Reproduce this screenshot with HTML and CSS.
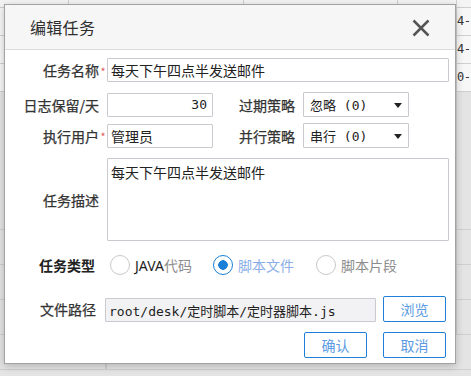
FILE: index.html
```html
<!DOCTYPE html>
<html lang="zh-CN">

<head>
    <meta charset="UTF-8">
    <meta name="viewport" content="width=device-width, initial-scale=1.0">
    <title>编辑任务</title>
    <link rel="stylesheet" href="styles.css">
</head>

<body>

    <!-- table behind the dialog -->
    <div class="sheet">
        <div class="sheet-row edge"><span class="cell w1"></span><span class="cell w2"></span><span class="cell w3"></span><span class="cell w4"></span><span class="cell w5"></span></div>
        <div class="sheet-row light"><span class="cell w1"></span><span class="cell w2"></span><span class="cell w3"></span><span class="cell w4"></span><span class="cell w5">4-</span></div>
        <div class="sheet-row light"><span class="cell w1"></span><span class="cell w2"></span><span class="cell w3"></span><span class="cell w4"></span><span class="cell w5">4-</span></div>
        <div class="sheet-row light"><span class="cell w1"></span><span class="cell w2"></span><span class="cell w3"></span><span class="cell w4"></span><span class="cell w5">0-</span></div>
        <div class="sheet-row tall"><span class="cell w1"></span><span class="cell w2"></span><span class="cell w3"></span><span class="cell w4"></span><span class="cell w5"></span></div>
        <div class="sheet-row"><span class="cell w1"></span><span class="cell w2"></span><span class="cell w3"></span><span class="cell w4"></span><span class="cell w5"></span></div>
        <div class="sheet-row"><span class="cell w1"></span><span class="cell w2"></span><span class="cell w3"></span><span class="cell w4"></span><span class="cell w5"></span></div>
        <div class="sheet-row"><span class="cell w1"></span><span class="cell w2"></span><span class="cell w3"></span><span class="cell w4"></span><span class="cell w5"></span></div>
        <div class="sheet-row"><span class="cell w0"></span><span class="cell"></span></div>
    </div>

    <form class="dialog">
        <div class="dialog-head">
            <h1>编辑任务</h1>
            <button type="button" class="close" aria-label="关闭">
                <svg width="18" height="18" viewBox="0 0 18 18">
                    <path d="M1.5 1.5 L16.5 16.5 M16.5 1.5 L1.5 16.5" stroke="#555" stroke-width="2.5" fill="none" />
                </svg>
            </button>
        </div>

        <div class="dialog-body">
            <div class="form-row r1">
                <label class="lbl" for="name">任务名称</label>
                <span class="req">*</span>
                <input type="text" id="name" class="field wide" value="每天下午四点半发送邮件">
            </div>

            <div class="form-row r2">
                <label class="lbl" for="keep">日志保留/天</label>
                <span class="req"></span>
                <input type="text" id="keep" class="field short num" value="30">
                <label class="lbl lbl2" for="expire">过期策略</label>
                <span class="req"></span>
                <div class="select" id="expire">忽略 (0)<span class="caret"></span></div>
            </div>

            <div class="form-row r3">
                <label class="lbl" for="user">执行用户</label>
                <span class="req">*</span>
                <input type="text" id="user" class="field short" value="管理员">
                <label class="lbl lbl2" for="parallel">并行策略</label>
                <span class="req"></span>
                <div class="select" id="parallel">串行 (0)<span class="caret"></span></div>
            </div>

            <div class="form-row r4">
                <label class="lbl" for="desc">任务描述</label>
                <span class="req"></span>
                <textarea id="desc" class="field area">每天下午四点半发送邮件</textarea>
            </div>

            <div class="form-row r5">
                <span class="lbl strong">任务类型</span>
                <div class="radios">
                    <div class="radio"><span class="dot"></span><span class="java">JAVA</span><span class="muted">代码</span></div>
                    <div class="radio checked"><span class="dot"></span>脚本文件</div>
                    <div class="radio"><span class="dot"></span><span class="muted">脚本片段</span></div>
                </div>
            </div>

            <div class="form-row r6">
                <label class="lbl path-lbl" for="path">文件路径</label>
                <input type="text" id="path" class="field path" value="root/desk/定时脚本/定时器脚本.js" readonly>
                <button type="button" class="btn">浏览</button>
            </div>

            <div class="form-row actions">
                <button type="submit" class="btn">确认</button>
                <button type="button" class="btn">取消</button>
            </div>
        </div>
    </form>

</body>

</html>
```

FILE: styles.css
```css
body {
    font-family: "Noto Sans CJK SC", "Noto Sans", sans-serif;
    margin: 0;
    padding: 0;
    width: 471px;
    height: 376px;
    overflow: hidden;
    background-color: #e4e4e4;
}

/* table behind */

.sheet {
    width: 471px;
    height: 376px;
    overflow: hidden;
}

.sheet-row {
    display: flex;
    height: 35px;
    border-bottom: 1px solid #cfcfcf;
    box-sizing: border-box;
}

.sheet-row.edge {
    height: 8px;
    background-color: #f4f4f4;
}

.sheet-row.light {
    height: 28px;
    background-color: #f7f7f7;
}

.sheet-row.tall {
    height: 138px;
}

.cell {
    flex: none;
    height: 100%;
    border-right: 1px solid #cfcfcf;
    box-sizing: border-box;
    font-family: "DejaVu Sans Mono", monospace;
    font-size: 12px;
    letter-spacing: -0.5px;
    line-height: 27px;
    color: #333;
    overflow: hidden;
    white-space: nowrap;
}

.w1 {
    width: 69px;
}

.w2 {
    width: 175px;
}

.w3 {
    width: 154px;
}

.w4 {
    width: 59px;
}

.w5 {
    width: 14px;
    padding-left: 0;
    border-right: none;
}

.w0 {
    width: 106px;
}

/* dialog */

.dialog {
    position: absolute;
    left: 4px;
    top: 4px;
    width: 452px;
    height: 360px;
    box-sizing: border-box;
    border: 1px solid #a2a2a2;
    background-color: #fff;
    box-shadow: 0 2px 8px rgba(0, 0, 0, 0.22);
}

.dialog-head {
    display: flex;
    align-items: center;
    justify-content: space-between;
    height: 44px;
    padding: 0 25px 0 25px;
    background-color: #f6f6f6;
    border-bottom: 1px solid #dcdcdc;
}

.dialog-head h1 {
    margin: 0;
    font-size: 16px;
    font-weight: normal;
    color: #2e2e2e;
    letter-spacing: 0.3px;
}

.close {
    display: flex;
    padding: 0;
    margin-top: 1px;
    border: none;
    background: none;
}

.dialog-body {
    padding: 8px 5px 0 0;
}

.form-row {
    display: flex;
    align-items: center;
}

.lbl {
    flex: none;
    width: 94px;
    text-align: right;
    font-size: 14px;
    color: #333;
    white-space: nowrap;
    -webkit-text-stroke: 0.25px #333;
}

.lbl2 {
    width: 82px;
}

.strong {
    font-weight: bold;
    color: #222;
    width: 90px;
    -webkit-text-stroke: 0;
}

.req {
    flex: none;
    width: 8px;
    text-align: center;
    color: #e25a5a;
    font-size: 11px;
    line-height: 11px;
    padding-top: 2px;
}

.field {
    box-sizing: border-box;
    border: 1px solid #c9c9d0;
    border-radius: 1px;
    font-family: "Noto Sans CJK SC", sans-serif;
    font-size: 14px;
    color: #222;
    background-color: #fff;
    padding: 0 3px;
    margin: 0;
    outline: none;
}

.wide {
    width: 342px;
    height: 24px;
}

.short {
    width: 106px;
    height: 24px;
}

.num {
    text-align: right;
    padding-right: 5px;
    font-family: "DejaVu Sans Mono", monospace;
    font-size: 13px;
}

.select {
    box-sizing: border-box;
    display: flex;
    align-items: center;
    justify-content: space-between;
    width: 106px;
    height: 25px;
    padding: 0 6px;
    border: 1px solid #c9c9d0;
    border-radius: 1px;
    font-family: "DejaVu Sans Mono", "Noto Sans CJK SC", monospace;
    font-size: 13px;
    color: #222;
}

.caret {
    width: 0;
    height: 0;
    border-left: 4px solid transparent;
    border-right: 4px solid transparent;
    border-top: 5px solid #222;
    margin-top: 1px;
}

.r1 {
    height: 24px;
}

.r2 {
    margin-top: 10px;
    height: 25px;
}

.r3 {
    margin-top: 6px;
    height: 25px;
}

.r4 {
    margin-top: 10px;
}

.area {
    width: 342px;
    height: 83px;
    resize: none;
    padding: 3px 3px;
    line-height: 20px;
}

.r5 {
    margin-top: 14px;
    height: 20px;
}

.radios {
    display: flex;
    margin-left: 15px;
}

.radio {
    display: flex;
    align-items: center;
    width: 103px;
    font-size: 14px;
    color: #8aaee6;
}

.radio:last-child {
    width: auto;
}

.dot {
    box-sizing: border-box;
    width: 20px;
    height: 20px;
    margin-right: 5px;
    border: 1px solid #c8c8c8;
    border-radius: 50%;
    background-color: #fff;
}

.radio.checked .dot {
    border: 1.5px solid #1a7fd6;
    background: radial-gradient(circle, #1a7fd6 0 4.5px, #fff 5px);
}

.java {
    color: #1e1e1e;
    font-family: "Noto Sans", sans-serif;
}

.muted {
    color: #8c8c8c;
}

.r6 {
    margin-top: 21px;
    height: 26px;
    align-items: flex-end;
}

.path-lbl {
    width: 91px;
    align-self: center;
}

.path {
    width: 271px;
    height: 24px;
    margin-left: 9px;
    background-color: #f2f2f4;
    font-family: "DejaVu Sans Mono", "Noto Sans CJK SC", monospace;
    font-size: 13px;
    padding-left: 3px;
}

.btn {
    box-sizing: border-box;
    width: 63px;
    height: 26px;
    border: 1px solid #1f7fd9;
    border-radius: 2px;
    background-color: #fff;
    font-family: "Noto Sans CJK SC", sans-serif;
    font-size: 14px;
    color: #5b9be2;
    padding: 0;
}

.r6 .btn {
    margin-left: 7px;
}

.actions {
    margin-top: 10px;
    justify-content: flex-end;
    gap: 16px;
    padding-right: 4px;
}
```
